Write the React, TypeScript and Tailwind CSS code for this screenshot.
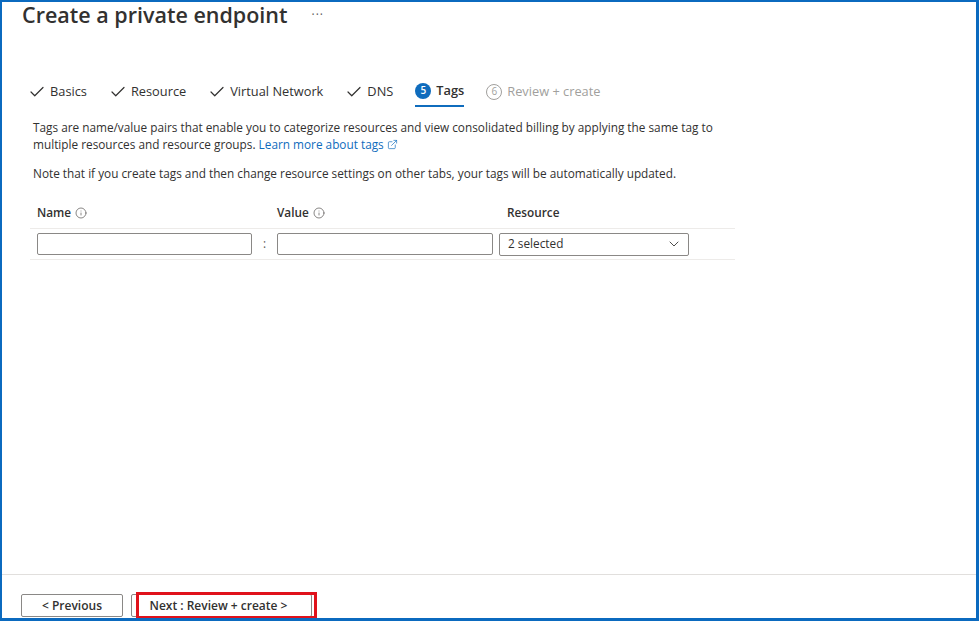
import { Check, ChevronDown, Info, ExternalLink } from "lucide-react"

const font = { fontFamily: '"Segoe UI", "Open Sans", "Liberation Sans", sans-serif' }

function DoneTab({ label }: { label: string }) {
  return (
    <div className="flex items-center gap-[4px] text-[12.8px] text-[#323130]">
      <Check size={18} strokeWidth={1.6} className="text-[#323130]" />
      <span>{label}</span>
    </div>
  )
}

export default function App() {
  return (
    <div
      style={font}
      className="w-[979px] h-[621px] bg-white flex flex-col overflow-hidden border-t-2 border-l-2 border-r-[3px] border-b-[3px] border-[#0b6abf]"
    >
      <div className="flex-1 px-[20px]">
        {/* Header */}
        <div className="flex items-center h-[28px]">
          <h1 className="text-[21.5px] font-semibold text-[#323130] leading-[28px] -mt-[3px]">Create a private endpoint</h1>
          <span className="ml-[24px] text-[12px] text-[#605e5c] tracking-[1px] -mt-[2px]">···</span>
        </div>

        {/* Tabs */}
        <div className="flex items-end gap-[22px] mt-[51px] pl-[6px]">
          <div className="pb-[6px]"><DoneTab label="Basics" /></div>
          <div className="pb-[6px]"><DoneTab label="Resource" /></div>
          <div className="pb-[6px]"><DoneTab label="Virtual Network" /></div>
          <div className="pb-[6px]"><DoneTab label="DNS" /></div>
          <div className="flex items-center gap-[5px] pb-[5px] border-b-[2px] border-[#0f6cbd] text-[12.8px] font-semibold text-[#323130]">
            <span className="w-[16px] h-[16px] rounded-full bg-[#0f6cbd] text-white text-[10px] font-semibold flex items-center justify-center">5</span>
            <span>Tags</span>
          </div>
          <div className="flex items-center gap-[5px] pb-[6px] text-[12.8px] text-[#a19f9d]">
            <span className="w-[16px] h-[16px] rounded-full border border-[#a19f9d] text-[10px] flex items-center justify-center">6</span>
            <span>Review + create</span>
          </div>
        </div>

        {/* Description */}
        <div className="pl-[11px] mt-[12px] text-[11.8px] leading-[17px] text-[#323130]">
          <p>
            Tags are name/value pairs that enable you to categorize resources and view consolidated billing by applying the same tag to
            <br />
            multiple resources and resource groups.{" "}
            <a className="text-[#0f6cbd] inline-flex items-center gap-[3px]">
              Learn more about tags
              <ExternalLink size={11} strokeWidth={1.5} />
            </a>
          </p>
          <p className="mt-[12px]">
            Note that if you create tags and then change resource settings on other tabs, your tags will be automatically updated.
          </p>
        </div>

        {/* Tag table */}
        <div className="ml-[8px] w-[705px] mt-[16px] text-[11.8px] text-[#323130]">
          <div className="flex items-center h-[31px] border-b border-[#edebe9] font-semibold">
            <div className="w-[247px] pl-[7px] flex items-center gap-[4px]">
              Name <Info size={12} strokeWidth={1.5} className="text-[#605e5c]" />
            </div>
            <div className="w-[230px] flex items-center gap-[4px]">
              Value <Info size={12} strokeWidth={1.5} className="text-[#605e5c]" />
            </div>
            <div>Resource</div>
          </div>
          <div className="flex items-center h-[31px] border-b border-[#edebe9]">
            <div className="ml-[7px] w-[215px] h-[22px] border border-[#8a8886] rounded-[2px]" />
            <span className="w-[25px] text-center text-[#605e5c]">:</span>
            <div className="w-[216px] h-[22px] border border-[#8a8886] rounded-[2px]" />
            <div className="ml-[6px] w-[190px] h-[23px] border border-[#8a8886] rounded-[2px] flex items-center justify-between pl-[8px] pr-[6px]">
              <span>2 selected</span>
              <ChevronDown size={16} strokeWidth={1.3} className="text-[#323130]" />
            </div>
          </div>
        </div>
      </div>

      {/* Footer */}
      <div className="h-[44px] border-t border-[#e1dfdd] flex items-end pl-[19px] gap-[8px] text-[12px] text-[#323130]">
        <button className="w-[102px] h-[23px] mb-[1px] border border-[#8a8886] rounded-[2px] font-semibold">&lt; Previous</button>
        <div className="relative">
          <button className="w-[181px] h-[23px] mb-[1px] border border-[#8a8886] rounded-[2px] font-semibold pr-[6px]">Next : Review + create &gt;</button>
          <div className="absolute left-[5px] -top-[2px] w-[181px] h-[27px] border-[3px] border-[#e0121b]" />
        </div>
      </div>
    </div>
  )
}
